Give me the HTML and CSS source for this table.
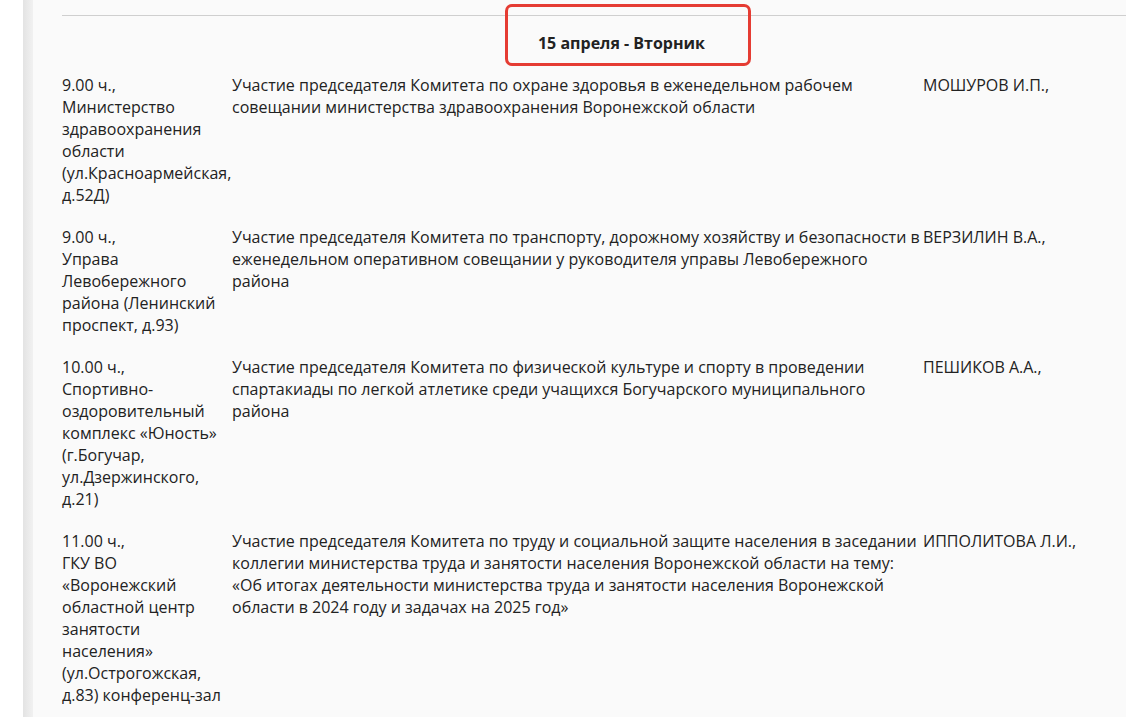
FILE: index.html
```html
<!DOCTYPE html>
<html lang="ru">
<head>
<meta charset="utf-8">
<title>Расписание</title>
<link rel="stylesheet" href="styles.css">
</head>
<body>
<div class="page">
  <div class="side"></div>
  <div class="side-shadow"></div>
  <main class="main">
    <table class="schedule">
      <colgroup>
        <col class="c-place">
        <col class="c-event">
        <col class="c-person">
      </colgroup>
      <thead>
        <tr>
          <th colspan="3" class="day">
            <span class="day-label">15 апреля - Вторник</span>
          </th>
        </tr>
      </thead>
      <tbody>
        <tr>
          <td>9.00 ч.,<br>Министерство<br>здравоохранения<br>области<br>(ул.Красноармейская,<br>д.52Д)</td>
          <td>Участие председателя Комитета по охране здоровья в еженедельном рабочем совещании министерства здравоохранения Воронежской области</td>
          <td>МОШУРОВ И.П.,</td>
        </tr>
        <tr>
          <td>9.00 ч.,<br>Управа<br>Левобережного<br>района (Ленинский<br>проспект, д.93)</td>
          <td>Участие председателя Комитета по транспорту, дорожному хозяйству и безопасности в еженедельном оперативном совещании у руководителя управы Левобережного района</td>
          <td>ВЕРЗИЛИН В.А.,</td>
        </tr>
        <tr>
          <td>10.00 ч.,<br>Спортивно-<br>оздоровительный<br>комплекс «Юность»<br>(г.Богучар,<br>ул.Дзержинского,<br>д.21)</td>
          <td>Участие председателя Комитета по физической культуре и спорту в проведении спартакиады по легкой атлетике среди учащихся Богучарского муниципального района</td>
          <td>ПЕШИКОВ А.А.,</td>
        </tr>
        <tr>
          <td>11.00 ч.,<br>ГКУ ВО<br>«Воронежский<br>областной центр<br>занятости<br>населения»<br>(ул.Острогожская,<br>д.83) конференц-зал</td>
          <td>Участие председателя Комитета по труду и социальной защите населения в заседании коллегии министерства труда и занятости населения Воронежской области на тему:<br>«Об итогах деятельности министерства труда и занятости населения Воронежской области в 2024 году и задачах на 2025 год»</td>
          <td>ИППОЛИТОВА Л.И.,</td>
        </tr>
      </tbody>
    </table>
  </main>
</div>
</body>
</html>
```

FILE: styles.css
```css
html, body {
  margin: 0;
  padding: 0;
  overflow: hidden;
  background: #ffffff;
}

body {
  font-family: "Open Sans", "Liberation Sans", sans-serif;
  font-size: 16px;
  line-height: 22px;
  color: #222222;
}

.page {
  display: flex;
  min-height: 717px;
}

.side {
  flex: 0 0 23px;
  background: #ffffff;
}

.side-shadow {
  flex: 0 0 10px;
  background: linear-gradient(to right, #e3e3e3, #f1f1f1);
}

.main {
  flex: 1 1 auto;
  min-width: 0;
  background: #fafafa;
  padding: 15px 0 0 29px;
}

.schedule {
  width: 1119px;
  table-layout: fixed;
  border-collapse: collapse;
  border-top: 1px solid #cfcfcf;
}

.c-place { width: 170px; }
.c-event { width: 691px; }
.c-person { width: auto; }

.day {
  padding: 16px 0 10px;
  text-align: center;
  font-weight: 700;
}

.day-label {
  position: relative;
  display: inline-block;
}

.day-label::after {
  content: "";
  position: absolute;
  left: -33px;
  right: -46px;
  top: -28px;
  bottom: -12px;
  border: 3px solid #e53c33;
  border-radius: 7px;
}

.schedule td {
  vertical-align: top;
  padding: 10px 0;
  text-align: left;
}
```
